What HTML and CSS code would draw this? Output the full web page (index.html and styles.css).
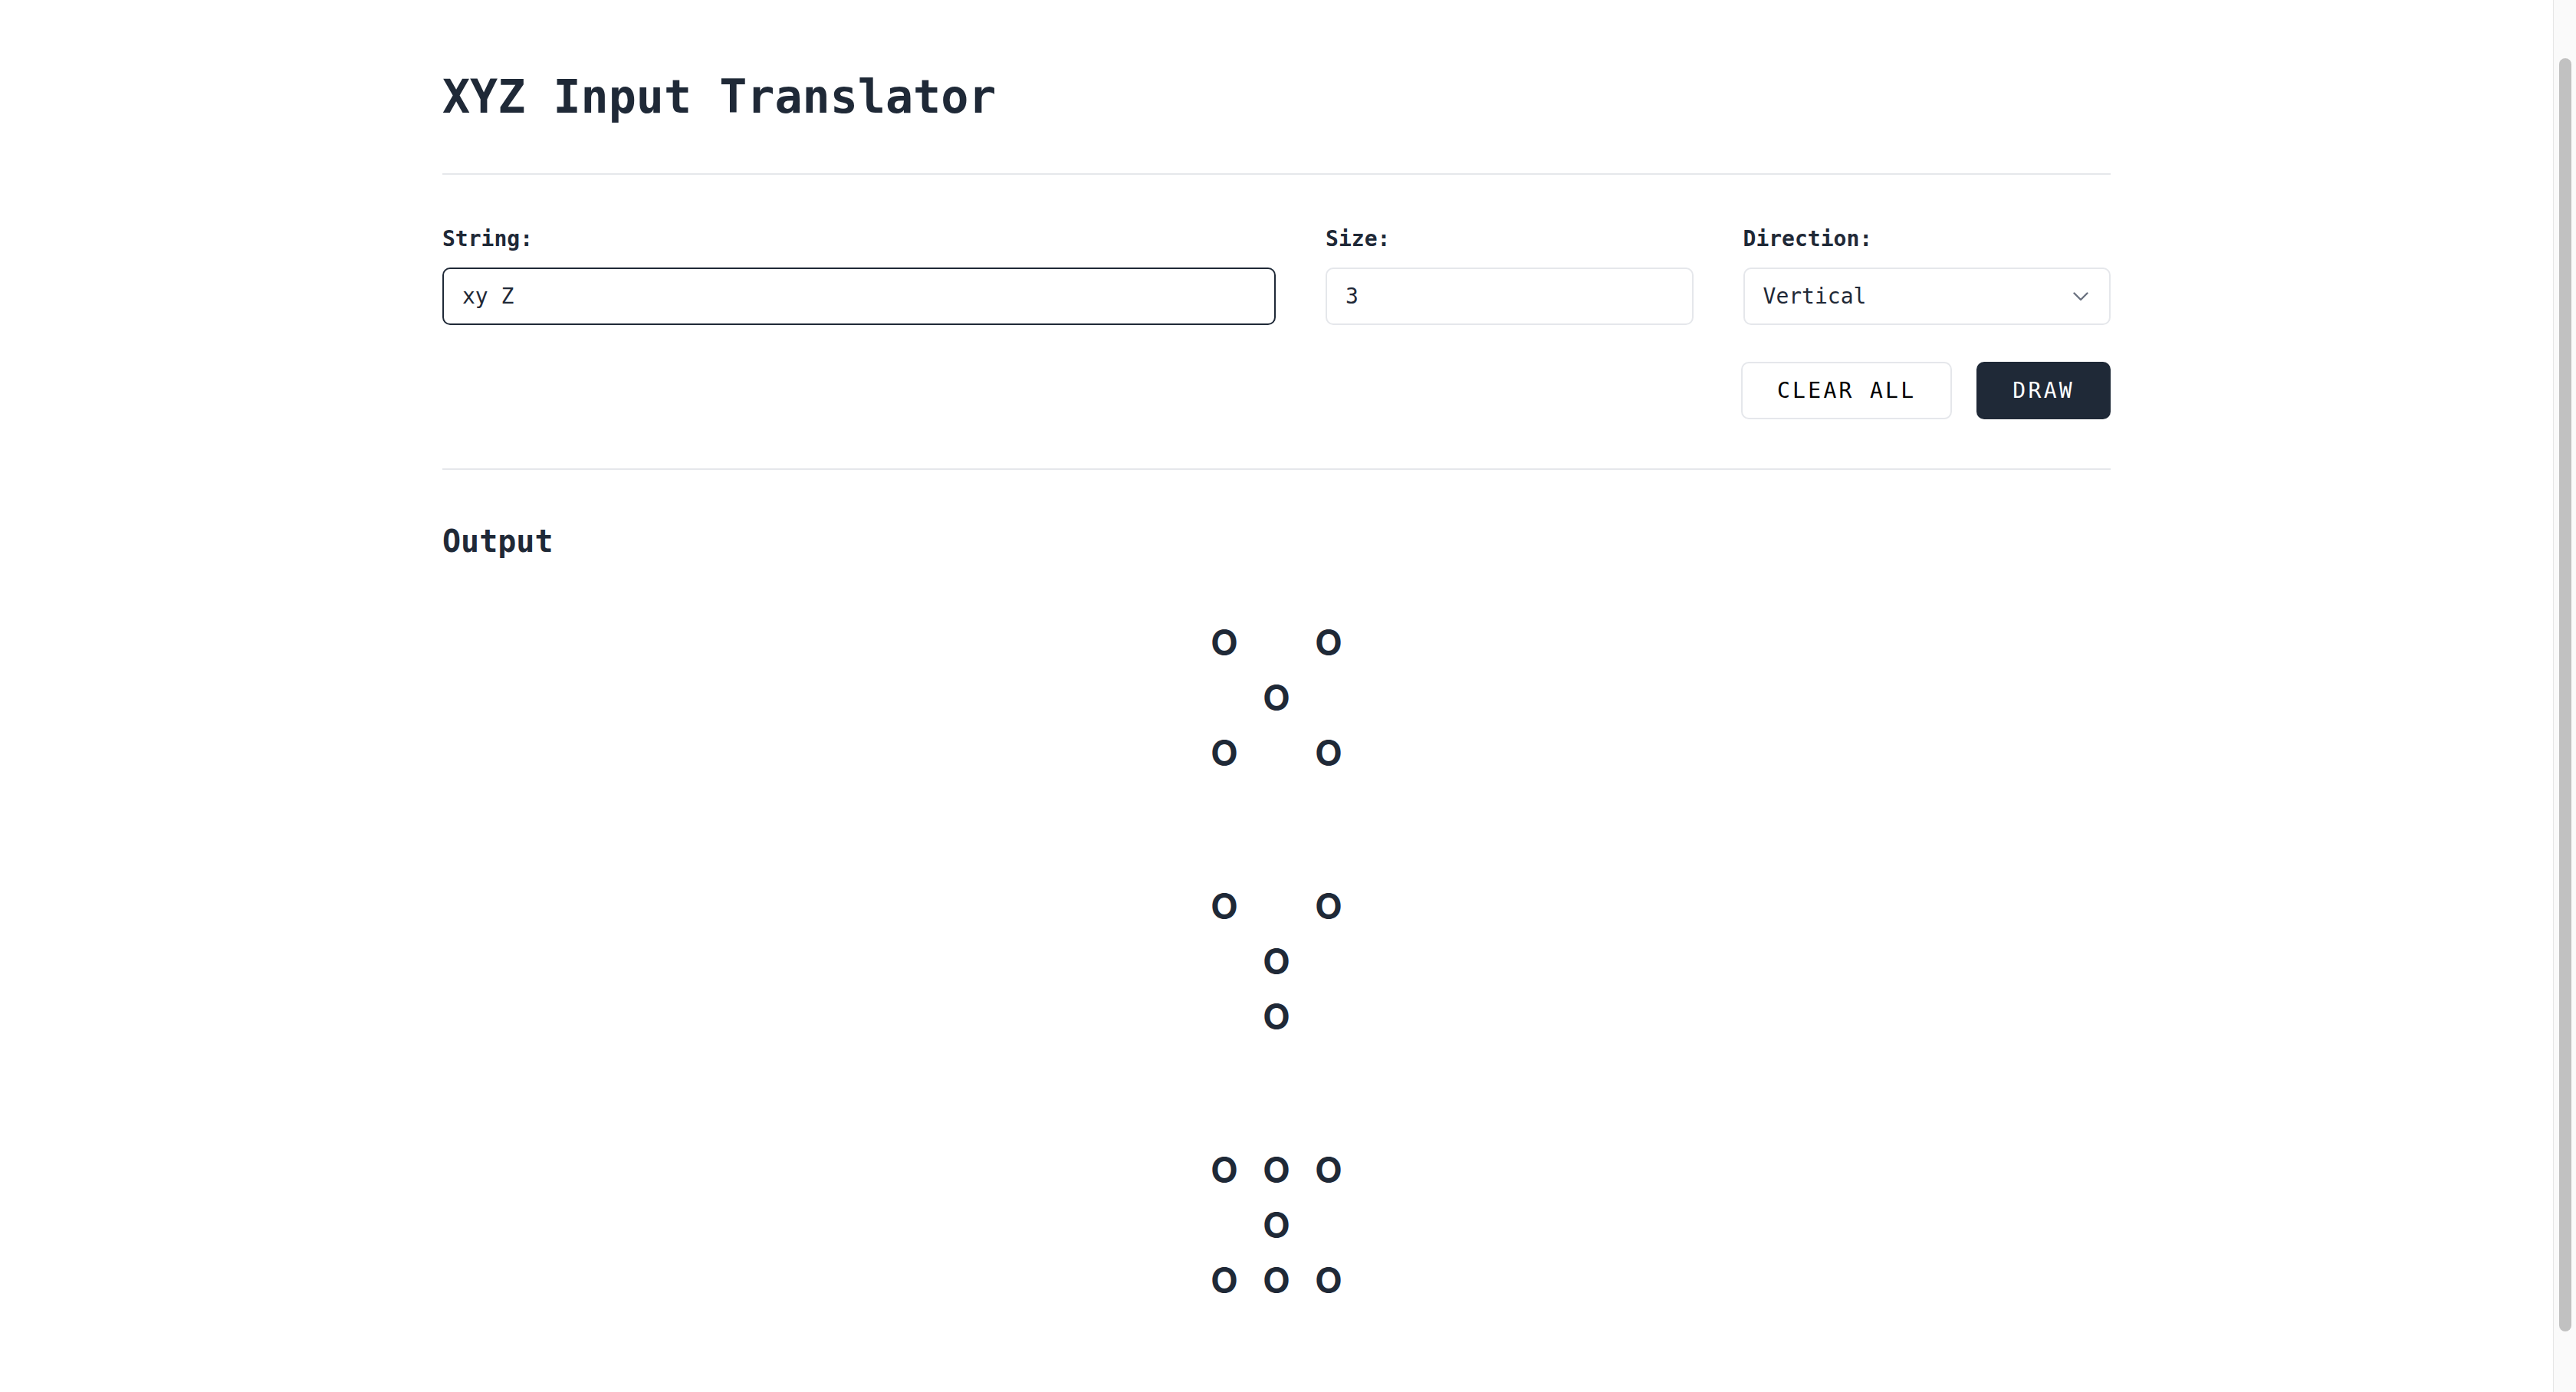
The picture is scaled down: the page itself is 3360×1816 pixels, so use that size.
FILE: index.html
```html
<!DOCTYPE html>
<html lang="en">
<head>
<meta charset="utf-8">
<title>XYZ Input Translator</title>
<link rel="stylesheet" href="styles.css">
</head>
<body>
<div class="page">
  <div class="container">
    <header class="title-bar">
      <h1 class="title">XYZ Input Translator</h1>
    </header>

    <section class="controls">
      <div class="fields">
        <div class="field">
          <label class="label" for="str">String:</label>
          <input id="str" class="input input-focused" type="text" value="xy Z">
        </div>
        <div class="field">
          <label class="label" for="size">Size:</label>
          <input id="size" class="input" type="text" value="3">
        </div>
        <div class="field">
          <label class="label" for="dir">Direction:</label>
          <div class="select-wrap">
            <select id="dir" class="input select">
              <option>Vertical</option>
              <option>Horizontal</option>
            </select>
            <svg class="chevron" width="20" height="12" viewBox="0 0 20 12" aria-hidden="true">
              <path d="M1.5 1.5 L10 10 L18.5 1.5" fill="none" stroke="#6b7280" stroke-width="2.4" stroke-linecap="round" stroke-linejoin="round"/>
            </svg>
          </div>
        </div>
      </div>
      <div class="actions">
        <button class="btn btn-light" type="button">CLEAR ALL</button>
        <button class="btn btn-dark" type="button">DRAW</button>
      </div>
    </section>

    <section class="output">
      <h2 class="output-title">Output</h2>
      <div class="letters">
        <div class="letter">
          <span>O</span><span></span><span>O</span>
          <span></span><span>O</span><span></span>
          <span>O</span><span></span><span>O</span>
        </div>
        <div class="letter">
          <span>O</span><span></span><span>O</span>
          <span></span><span>O</span><span></span>
          <span></span><span>O</span><span></span>
        </div>
        <div class="letter">
          <span>O</span><span>O</span><span>O</span>
          <span></span><span>O</span><span></span>
          <span>O</span><span>O</span><span>O</span>
        </div>
      </div>
    </section>
  </div>
</div>
<div class="scrollbar" aria-hidden="true"><div class="scrollbar-thumb"></div></div>
</body>
</html>
```

FILE: styles.css
```css
html {
  background: #ffffff;
}

body {
  margin: 0;
  background: #ffffff;
  color: #1f2937;
  font-family: "DejaVu Sans Mono", "Liberation Mono", monospace;
}

.page {
  box-sizing: border-box;
  min-height: 100vh;
  padding-top: 90px;
  padding-right: 30px;
}

.container {
  width: 2176px;
  margin: 0 auto;
}

.title-bar {
  padding-bottom: 64px;
  border-bottom: 2px solid #e5e7eb;
}

.title {
  margin: 0;
  font-size: 60px;
  line-height: 72px;
  font-weight: 700;
  color: #1f2937;
}

.controls {
  padding: 64px 0 64px;
  border-bottom: 2px solid #e5e7eb;
}

.fields {
  display: grid;
  grid-template-columns: 1086fr 479fr 479fr;
  column-gap: 65px;
}

.field {
  display: flex;
  flex-direction: column;
}

.label {
  display: block;
  font-size: 28px;
  line-height: 40px;
  font-weight: 700;
  color: #1f2937;
  margin-bottom: 17px;
}

.input {
  box-sizing: border-box;
  width: 100%;
  height: 75px;
  margin: 0;
  padding: 0 24px;
  border: 2px solid #e5e7eb;
  border-radius: 10px;
  background: #ffffff;
  color: #1f2937;
  font-family: "DejaVu Sans Mono", "Liberation Mono", monospace;
  font-size: 28px;
  outline: none;
}

.input-focused {
  border-color: #1f2937;
}

.select-wrap {
  position: relative;
}

.select {
  -webkit-appearance: none;
  appearance: none;
  display: block;
}

.chevron {
  position: absolute;
  right: 29px;
  top: 32px;
  pointer-events: none;
}

.actions {
  display: flex;
  justify-content: flex-end;
  gap: 32px;
  margin-top: 48px;
}

.btn {
  box-sizing: border-box;
  height: 75px;
  padding: 0 45px;
  border: 2px solid #e5e7eb;
  border-radius: 10px;
  font-family: "DejaVu Sans Mono", "Liberation Mono", monospace;
  font-size: 28px;
  font-weight: 400;
  letter-spacing: 3.3px;
  cursor: pointer;
}

.btn-light {
  background: #ffffff;
  color: #000000;
}

.btn-dark {
  background: #1f2937;
  border-color: #1f2937;
  color: #ffffff;
}

.output {
  padding-top: 65px;
}

.output-title {
  margin: 0;
  font-size: 40px;
  line-height: 56px;
  font-weight: 700;
  color: #1f2937;
}

.letters {
  display: flex;
  flex-direction: column;
  align-items: center;
  gap: 128px;
  margin-top: 68px;
}

.letter {
  display: grid;
  grid-template-columns: repeat(3, 68px);
  grid-auto-rows: 72px;
  font-family: Inter, "Noto Sans", sans-serif;
  font-size: 46px;
  line-height: 72px;
  font-weight: 700;
  color: #1f2937;
  text-align: center;
}

.scrollbar {
  position: fixed;
  top: 0;
  right: 0;
  box-sizing: border-box;
  width: 30px;
  height: 100vh;
  padding: 76px 6px 79px 7px;
  background: #fafafa;
  border-left: 1px solid #e6e6e6;
}

.scrollbar-thumb {
  height: 100%;
  background: #c1c1c1;
  border-radius: 8px;
}
```
